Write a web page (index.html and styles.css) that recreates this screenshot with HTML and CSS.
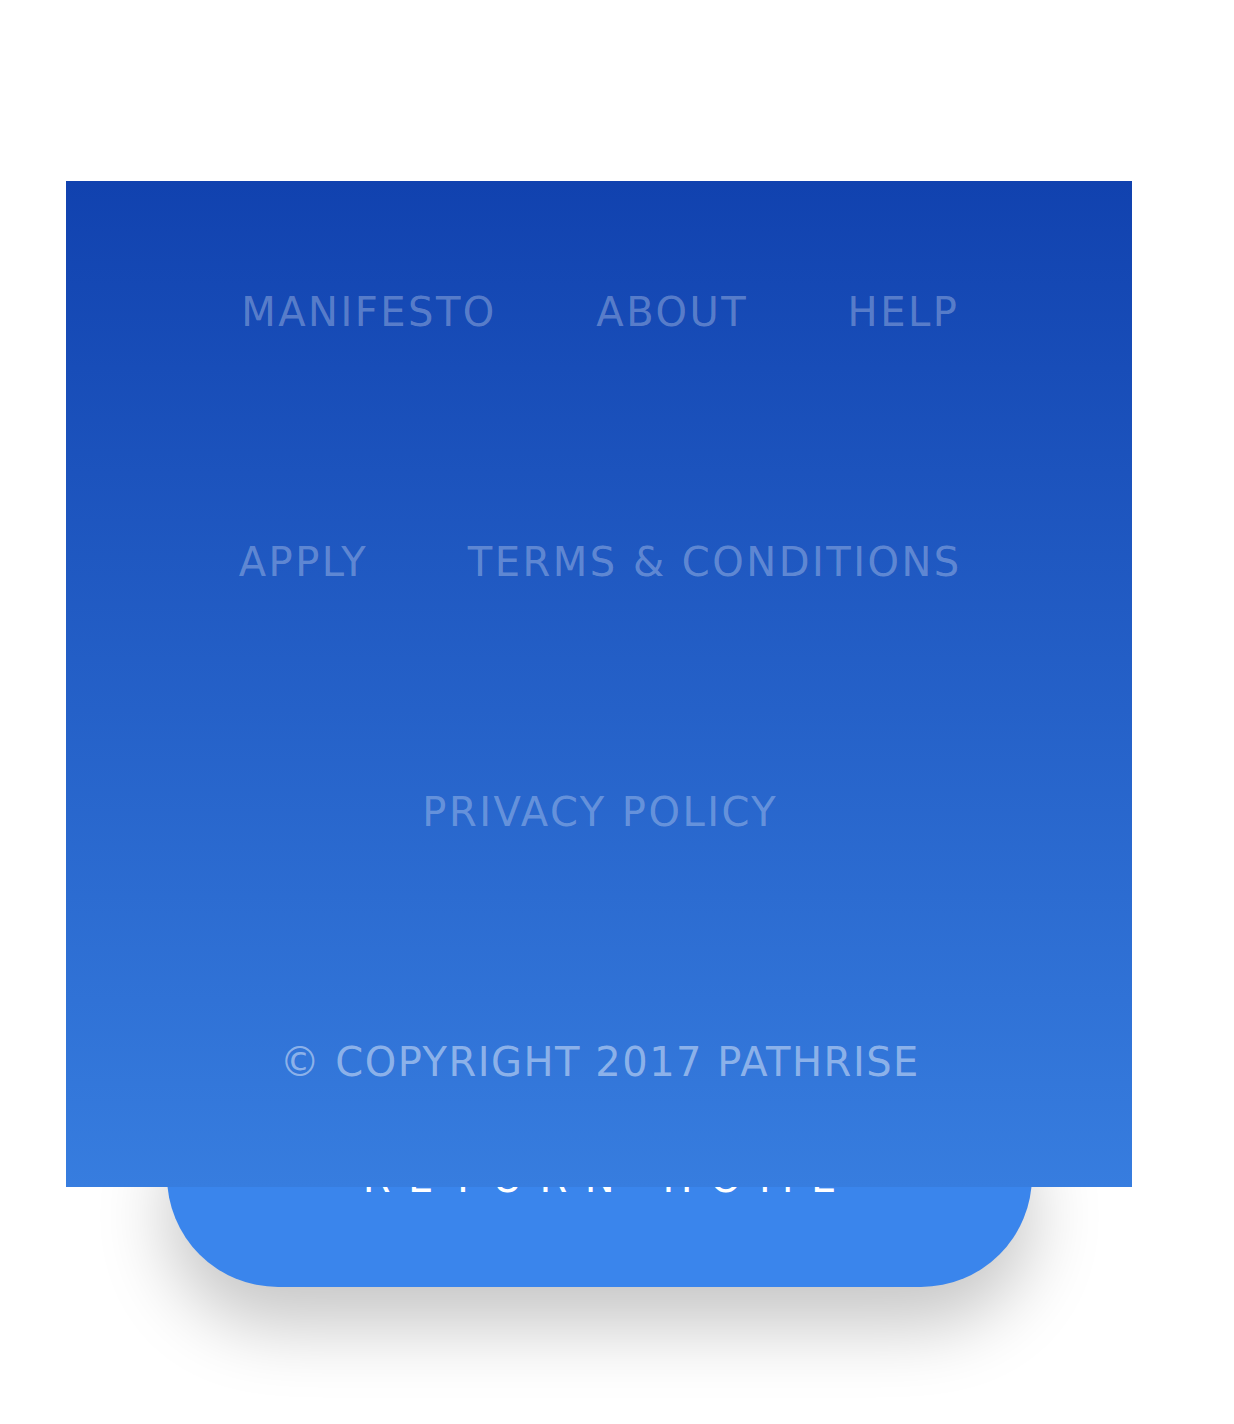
FILE: index.html
```html
<!DOCTYPE html>
<html lang="en">
<head>
<meta charset="utf-8">
<title>Pathrise</title>
<link rel="stylesheet" href="styles.css">
</head>
<body>
<div class="page">
  <footer class="panel">
    <nav class="row">
      <a class="link" href="#">Manifesto</a>
      <a class="link" href="#">About</a>
      <a class="link" href="#">Help</a>
    </nav>
    <nav class="row">
      <a class="link" href="#">Apply</a>
      <a class="link" href="#">Terms &amp; Conditions</a>
    </nav>
    <nav class="row">
      <a class="link" href="#">Privacy Policy</a>
    </nav>
    <div class="row">
      <span class="copy">© Copyright 2017 Pathrise</span>
    </div>
  </footer>
  <a class="return" href="#"><span class="return-label">Return Home</span></a>
</div>
</body>
</html>
```
FILE: styles.css
```css
html, body {
  margin: 0;
  padding: 0;
  background: #ffffff;
}

.page {
  width: 1234px;
  min-height: 1424px;
  padding-top: 181px;
  box-sizing: border-box;
  font-family: "DejaVu Sans", "Open Sans", sans-serif;
}

.panel {
  position: relative;
  z-index: 1;
  margin-left: 66px;
  width: 1066px;
  height: 1006px;
  box-sizing: border-box;
  padding-top: 6px;
  background: linear-gradient(180deg, #1142af 0%, #377ddf 100%);
  display: flex;
  flex-direction: column;
}

.row {
  height: 250px;
  display: flex;
  justify-content: center;
  align-items: center;
  gap: 102px;
}

.link,
.copy {
  font-size: 40px;
  line-height: 1;
  text-transform: uppercase;
  text-decoration: none;
  white-space: nowrap;
}

.link {
  color: rgba(255, 255, 255, 0.3);
  letter-spacing: 2.5px;
  margin-right: -2.5px;
}

.copy {
  color: rgba(255, 255, 255, 0.45);
  letter-spacing: 1.5px;
  margin-right: -1.5px;
}

.return {
  display: flex;
  justify-content: center;
  align-items: flex-start;
  margin-left: 167px;
  margin-top: -122px;
  width: 865px;
  height: 222px;
  box-sizing: border-box;
  padding-top: 93px;
  background: #3a85ec;
  border-radius: 120px;
  box-shadow: 0 40px 70px rgba(0, 0, 0, 0.22);
  text-decoration: none;
}

.return-label {
  color: #ffffff;
  font-size: 40px;
  line-height: 1;
  letter-spacing: 17.5px;
  margin-right: -17.5px;
  text-transform: uppercase;
}
```
